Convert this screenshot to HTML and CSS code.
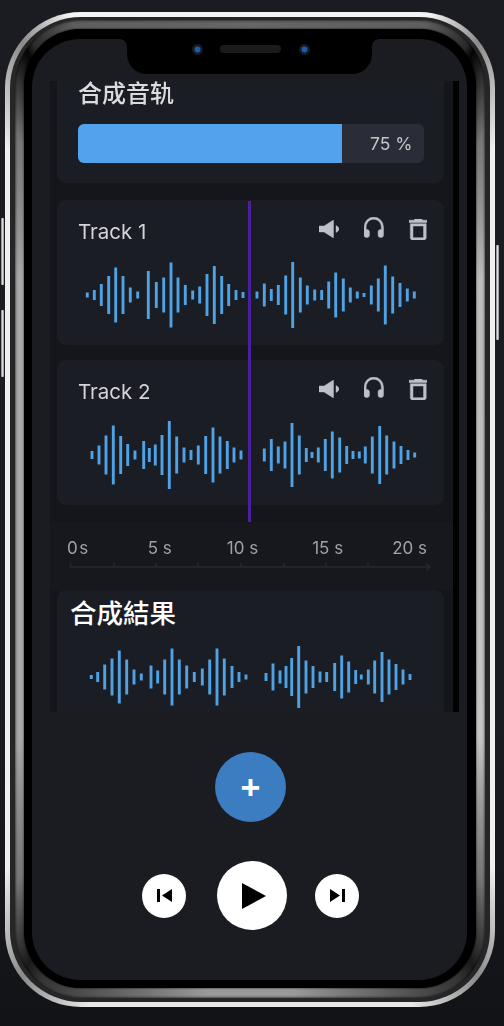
FILE: index.html
```html
<!DOCTYPE html>
<html lang="zh-Hant">
<head>
<meta charset="utf-8">
<title>合成音轨</title>
<link rel="stylesheet" href="styles.css">
</head>
<body>
<div class="phone">
  <span class="side side-l1"></span>
  <span class="side side-l2"></span>
  <span class="side side-r"></span>
  <div class="band">
    <div class="silver">
      <div class="bezel">
        <div class="screen">
          <div class="notch">
            <span class="camera"></span>
            <span class="speaker"></span>
            <span class="camera"></span>
          </div>
          <div class="panel">
            <span class="playhead"></span>
            <section class="card mix">
              <h2 class="mix-title">合成音轨</h2>
              <div class="progress">
                <div class="progress-fill"></div>
                <span class="progress-label">75 %</span>
              </div>
            </section>
            <section class="card track">
              <div class="track-head">
                <span class="track-name">Track 1</span>
                <div class="track-icons">
                  <svg class="ico-vol" viewBox="0 0 20 18"><path d="M0 6h5L14.5 0v18L5 12H0zM17 5.5c1.8.9 3 2.1 3 3.5s-1.2 2.6-3 3.5z"/></svg>
                  <svg class="ico-head" viewBox="3 3 18 18" preserveAspectRatio="none"><path d="M12 3a9 9 0 0 0-9 9v7c0 1.100.9 2 2 2h1c1.100 0 2-.9 2-2v-3c0-1.100-.9-2-2-2H5v-2c0-3.870 3.130-7 7-7s7 3.130 7 7v2h-1c-1.100 0-2 .9-2 2v3c0 1.100.9 2 2 2h1c1.100 0 2-.9 2-2v-7a9 9 0 0 0-9-9z"/></svg>
                  <svg class="ico-trash" viewBox="5 3 14 18" preserveAspectRatio="none"><path d="M6 19c0 1.100.9 2 2 2h8c1.100 0 2-.9 2-2V7H6v12zM8 9h8v10H8V9zm7.500-5l-1-1h-5l-1 1H5v2h14V4h-3.500z"/></svg>
                </div>
              </div>
              <svg class="wave" viewBox="57 -35 387 70"><path d="M87.3-2.500v5M94.3-5v10M101.3-11v22M108.700-19v38M115.700-27.500v55M123-19v38M130.300-7.500v15M137.700-3.500v7M148.300-24v48M156.300-13v26M163.700-17.500v35M171-32.500v65M178-17.500v35M185.300-10v20M192.700-4.500v9M199.700-8.500v17M207-21v42M214.300-29v58M221.700-19v38M228.700-11v22M236-5v10M243-3v6M257-3.500v7M264.300-11.500v23M271.300-6v12M278.300-10v20M285.700-19.500v39M292.700-33v66M300.300-17.500v35M307.300-9.500v19M314.700-5.500v11M321.700-5v10M328.700-13.500v27M335.700-22.500v45M343.300-16.500v33M350.300-7.500v15M357.300-3.500v7M364-2v4M371.300-9.500v19M378.300-16.500v33M385.300-29.500v59M392.700-18.500v37M400-12v24M407.300-6.500v13M414.300-3.500v7"/></svg>
            </section>
            <section class="card track">
              <div class="track-head">
                <span class="track-name">Track 2</span>
                <div class="track-icons">
                  <svg class="ico-vol" viewBox="0 0 20 18"><path d="M0 6h5L14.5 0v18L5 12H0zM17 5.5c1.8.9 3 2.1 3 3.5s-1.2 2.6-3 3.5z"/></svg>
                  <svg class="ico-head" viewBox="3 3 18 18" preserveAspectRatio="none"><path d="M12 3a9 9 0 0 0-9 9v7c0 1.100.9 2 2 2h1c1.100 0 2-.9 2-2v-3c0-1.100-.9-2-2-2H5v-2c0-3.870 3.130-7 7-7s7 3.130 7 7v2h-1c-1.100 0-2 .9-2 2v3c0 1.100.9 2 2 2h1c1.100 0 2-.9 2-2v-7a9 9 0 0 0-9-9z"/></svg>
                  <svg class="ico-trash" viewBox="5 3 14 18" preserveAspectRatio="none"><path d="M6 19c0 1.100.9 2 2 2h8c1.100 0 2-.9 2-2V7H6v12zM8 9h8v10H8V9zm7.500-5l-1-1h-5l-1 1H5v2h14V4h-3.500z"/></svg>
                </div>
              </div>
              <svg class="wave" viewBox="57 -35 387 70"><path d="M92-4v8M99-9.500v19M106-19.500v39M113.300-29.500v59M120.700-19v38M127.700-11v22M135-4.500v9M143.700-14v28M149.300-7v14M155.300-10.500v21M162-20v40M169.300-34v68M176.700-18.500v37M184-7.500v15M191-5v10M198.300-9.500v19M205.700-19v38M213-27.500v55M220-18.500v37M227.300-14v28M234-7.500v15M241-4.500v9M264.300-6.500v13M271.300-16v32M278.300-8.500v17M285-13.500v27M292-32v64M299.300-19.500v39M306.300-7v14M312-3v6M318.300-7.500v15M325.300-16v32M332.300-23.500v47M339.700-17.500v35M346.700-9v18M353-4v8M359.300-3.500v7M365.300-8.500v17M372.300-18.500v37M379.700-29v58M386.700-19.500v39M394-13.500v27M401-9v18M408-5v10M414.700-2.500v5"/></svg>
            </section>
            <div class="timeline">
              <div class="ticks">
                <span>0s</span><span>5 s</span><span>10 s</span><span>15 s</span><span>20 s</span>
              </div>
              <svg class="axis" viewBox="50 560 403 12"><path class="axis-line" d="M70 567H429M70.500 563v4M114 563v4M156 563v4M198 563v4M241 563v4M284 563v4M326 563v4M368 563v4M426 563.500l4 3.500-4 3.500"/></svg>
            </div>
            <section class="card result">
              <h2 class="result-title">合成結果</h2>
              <svg class="wave" viewBox="57 -35 387 70"><path d="M91.300-2v4M97.700-5v10M104.700-12.500v25M112-18.500v37M119.300-26.500v53M126.700-17.500v35M134-7.500v15M141.300-3.500v7M151-11.500v23M157.700-6.500v13M164.700-17.500v35M172-28.500v57M179.300-17.500v35M186.700-11.500v23M194.300-5v10M202.300-8.500v17M209.700-17.500v35M217-28.500v57M224.300-18.500v37M232-11v22M239-5v10M246-2.500v5M266-4v8M273-13.500v27M280-6.500v13M286-11v22M291.700-19v38M298.700-31v62M306-16.500v33M313-11v22M320-5.500v11M326.700-5v10M334.700-14v28M341.700-21.500v43M348.700-15.500v31M355.700-7v14M361.300-2.500v5M368.300-7.500v15M374.700-16.500v33M382-25v50M389-17.500v35M396-13v26M403-7.500v15M410-3v6"/></svg>
            </section>
          </div>
          <div class="controls">
            <button class="add" type="button">+</button>
            <div class="transport">
              <button class="btn-small" type="button"><svg class="ico-skip" viewBox="0 0 15 13"><path d="M0 0h3v13H0zM15 0v13L5 6.500z"/></svg></button>
              <button class="btn-play" type="button"><svg class="ico-play" viewBox="0 0 24 26"><path d="M0 0l24 13L0 26z"/></svg></button>
              <button class="btn-small" type="button"><svg class="ico-skip" viewBox="0 0 15 13"><path d="M0 0v13l10-6.500zM12 0h3v13h-3z"/></svg></button>
            </div>
          </div>
        </div>
      </div>
    </div>
  </div>
</div>
</body>
</html>
```
FILE: styles.css
```css
* { box-sizing: border-box; }
html, body { margin: 0; }
body {
  width: 504px;
  height: 1026px;
  overflow: hidden;
  padding: 12px 9px 0 5px;
  background: linear-gradient(180deg, #1a1c22 0%, #1a1c22 70%, #121317 100%);
  font-family: Inter, "Noto Sans CJK TC", sans-serif;
}
.phone {
  position: relative;
  height: 995px;
  border-radius: 76px;
  padding: 5px;
  background: conic-gradient(from 0deg at 50% 50%,
    #f4f4f4 0deg, #f4f4f4 20deg, #8a8a8a 26deg, #f0f0f0 34deg,
    #f0f0f0 146deg, #8a8a8a 154deg, #e8e8e8 162deg,
    #e8e8e8 198deg, #8a8a8a 206deg, #f0f0f0 214deg,
    #f0f0f0 326deg, #8a8a8a 334deg, #f4f4f4 340deg, #f4f4f4 360deg);
}
.side { position: absolute; width: 3px; background: linear-gradient(90deg, #777, #ddd, #888); border-radius: 1px; }
.side-l1 { left: -4px; top: 206px; height: 67px; }
.side-l2 { left: -4px; top: 298px; height: 67px; }
.side-r { right: -4px; top: 233px; height: 95px; }
.band {
  height: 100%;
  border-radius: 71px;
  background: #262628;
  padding: 3px 5px 4px;
}
.silver {
  height: 100%;
  border-radius: 66px;
  padding: 9px 9px 10px;
  background: conic-gradient(from 0deg at 50% 50%,
    #666 0deg, #5e5e5e 20deg, #2a2a2a 25deg, #050505 26deg, #777 32deg, #bcbcbc 45deg,
    #c4c4c4 135deg, #777 148deg, #1a1a1a 154deg, #333 156deg, #9a9a9a 175deg, #9a9a9a 185deg,
    #333 204deg, #1a1a1a 206deg, #777 212deg, #a8a8a8 225deg,
    #a8a8a8 315deg, #777 328deg, #050505 334deg, #2a2a2a 335deg, #5e5e5e 340deg, #666 360deg);
  box-shadow: inset 0 0 3px #000;
}
.bezel {
  height: 100%;
  border-radius: 57px;
  background: #000;
  padding: 10px 9px 8px 8px;
  box-shadow: 0 0 2px #000;
}
.screen {
  position: relative;
  height: 100%;
  border-radius: 48px;
  background: #1a1c22;
  padding: 42px 8px 0 18px;
}
.notch {
  position: absolute;
  top: 0;
  left: 95px;
  width: 245px;
  height: 35px;
  border-radius: 0 0 20px 20px;
  background: #000;
  display: flex;
  justify-content: center;
  align-items: flex-start;
  gap: 17.5px;
  padding: 4.5px 0 0 2px;
}
.notch::before, .notch::after {
  content: "";
  position: absolute;
  top: 0;
  width: 7px;
  height: 7px;
}
.notch::before { left: -7px; background: radial-gradient(circle at 0 100%, transparent 6.5px, #000 7px); }
.notch::after { right: -7px; background: radial-gradient(circle at 100% 100%, transparent 6.5px, #000 7px); }
.camera {
  width: 11px;
  height: 11px;
  border-radius: 50%;
  background: radial-gradient(circle, #1f5aa8 0 2.6px, #151a24 3.4px);
}
.speaker {
  width: 61px;
  height: 8px;
  margin-top: 1.5px;
  border-radius: 4px;
  background: #1b1b1d;
}
.panel {
  position: relative;
  height: 631px;
  background: #14161b;
  border-right: 6px solid #000;
  padding: 0 9px 0 7px;
}
.playhead {
  position: absolute;
  z-index: 2;
  left: 198px;
  top: 120px;
  width: 2.5px;
  height: 321px;
  background: #4a209f;
}
.card { background: #1a1d24; border-radius: 9px; }
.mix { height: 102px; border-radius: 0 0 9px 9px; margin-bottom: 17px; padding: 0 20px 0 21px; }
.mix-title {
  margin: 0 0 21px;
  height: 22px;
  line-height: 22px;
  font-size: 24px;
  font-weight: 500;
  color: #dcdcdc;
  font-family: "Noto Sans CJK SC", sans-serif;
  filter: blur(.4px);
}
.progress {
  position: relative;
  height: 39px;
  border-radius: 6px;
  background: #2a2d37;
  overflow: hidden;
  display: flex;
  align-items: center;
  justify-content: flex-end;
  padding-right: 11.5px;
}
.progress-fill { position: absolute; left: 0; top: 0; bottom: 0; width: 76.3%; background: #52a2ee; }
.progress-label { font-size: 17.5px; color: #c4c4c6; filter: blur(.3px); }
.track { height: 145px; margin-bottom: 15px; padding: 17px 17px 0 22px; }
.track + .track { margin-bottom: 0; }
.track-head { display: flex; justify-content: space-between; align-items: center; height: 24px; margin-bottom: 19px; }
.track-name { font-size: 20.5px; color: #d4d4d6; filter: blur(.4px); margin: 4px 0 0 -1px; }
.track-icons { display: flex; align-items: center; gap: 25px; fill: #bcc0c7; stroke: #bcc0c7; stroke-width: .4; filter: blur(.3px); }
.ico-vol { width: 20px; height: 18px; margin-top: -1px; }
.ico-head { width: 19.5px; height: 20.5px; margin-top: -3px; }
.ico-trash { width: 18.5px; height: 21px; }
.wave {
  display: block;
  width: 387px;
  height: 70px;
  margin-left: -22px;
  fill: none;
  stroke: #4fa2e4;
  stroke-width: 2.9;
  filter: blur(.35px);
}
.timeline { margin: 17px -9px 0 -7px; height: 68px; padding-top: 14px; background: #16181d; }
.ticks {
  display: flex;
  height: 24px;
  line-height: 24px;
  padding-left: 17px;
  font-size: 17px;
  color: #a2a2a6;
  filter: blur(.4px);
}
.ticks span:nth-child(1) { letter-spacing: 1.5px; }
.ticks span:nth-child(2) { margin-left: 58px; }
.ticks span:nth-child(3) { margin-left: 55px; }
.ticks span:nth-child(4) { margin-left: 54px; }
.ticks span:nth-child(5) { margin-left: 49px; }
.axis { display: block; width: 403px; height: 12px; }
.axis-line { fill: none; stroke: #272731; stroke-width: 1.5; }
.result { height: 122px; padding: 6px 0 0; border-radius: 9px 9px 0 0; }
.result-title {
  margin: 0 0 14px 13px;
  height: 32px;
  line-height: 32px;
  font-size: 26.5px;
  font-weight: 500;
  color: #fff;
  font-family: "Noto Sans CJK TC", sans-serif;
}
.result .wave { margin-left: 0; }
.controls { display: flex; flex-direction: column; align-items: center; padding: 40px 0 0; margin-left: -8px; }
button { border: 0; padding: 0; display: flex; align-items: center; justify-content: center; }
.add {
  width: 71px;
  height: 70px;
  border-radius: 50%;
  background: #3b7dc0;
  color: #fff;
  font-family: "Liberation Sans", sans-serif;
  font-weight: 700;
  font-size: 34px;
  line-height: 1;
  margin-bottom: 39px;
}
.transport { display: flex; align-items: center; gap: 28.5px; }
.btn-small { width: 44px; height: 44px; border-radius: 50%; background: #fff; }
.btn-play { width: 70px; height: 69px; margin-left: 2px; border-radius: 50%; background: #fff; }
.ico-skip { width: 15px; height: 13px; fill: #000; }
.ico-play { width: 24px; height: 26px; margin-left: 4px; fill: #000; }
```
